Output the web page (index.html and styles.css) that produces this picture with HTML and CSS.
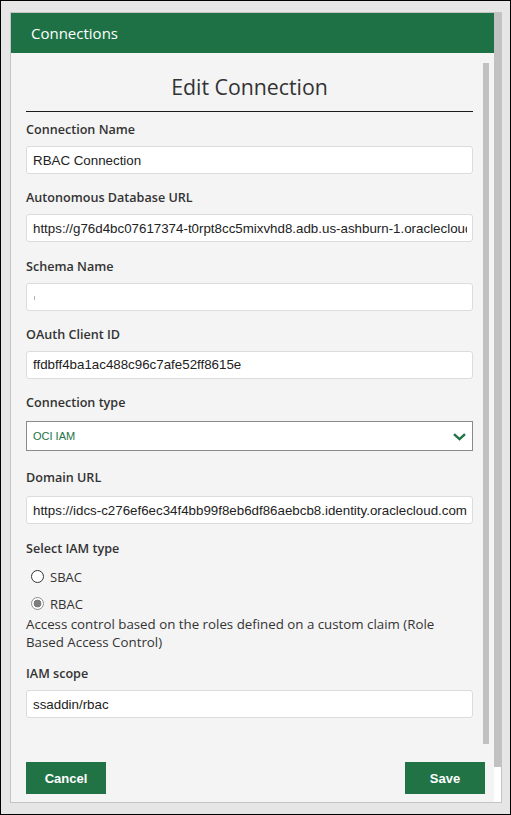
FILE: index.html
```html
<!DOCTYPE html>
<html lang="en">
<head>
<meta charset="utf-8">
<title>Connections</title>
<link rel="stylesheet" href="styles.css">
</head>
<body>
<div class="frame">
  <div class="panel">
    <div class="main">
      <div class="header">Connections</div>
      <div class="body">
        <div class="scroll">
          <div class="content">
            <h1 class="title">Edit Connection</h1>
            <div class="fields">
              <div class="field">
                <div class="label">Connection Name</div>
                <input class="input" type="text" value="RBAC Connection">
              </div>
              <div class="field">
                <div class="label">Autonomous Database URL</div>
                <input class="input" type="text" value="https://g76d4bc07617374-t0rpt8cc5mixvhd8.adb.us-ashburn-1.oraclecloud.com">
              </div>
              <div class="field">
                <div class="label">Schema Name</div>
                <div class="input input-box"><span class="mark"></span></div>
              </div>
              <div class="field">
                <div class="label">OAuth Client ID</div>
                <input class="input" type="text" value="ffdbff4ba1ac488c96c7afe52ff8615e">
              </div>
              <div class="field field-select">
                <div class="label">Connection type</div>
                <div class="select">
                  <span class="select-value">OCI IAM</span>
                  <svg class="chevron" width="13" height="8" viewBox="0 0 13 8"><path d="M1 1.2 L6.5 6.2 L12 1.2" fill="none" stroke="#217346" stroke-width="2.4"/></svg>
                </div>
              </div>
              <div class="field field-after-select">
                <div class="label">Domain URL</div>
                <input class="input" type="text" value="https://idcs-c276ef6ec34f4bb99f8eb6df86aebcb8.identity.oraclecloud.com">
              </div>
              <div class="field">
                <div class="label">Select IAM type</div>
                <div class="radios">
                  <div class="radio"><span class="radio-dot"></span><span>SBAC</span></div>
                  <div class="radio"><span class="radio-dot checked"></span><span>RBAC</span></div>
                </div>
                <p class="desc">Access control based on the roles defined on a custom claim (Role Based Access Control)</p>
              </div>
              <div class="field field-scope">
                <div class="label">IAM scope</div>
                <input class="input" type="text" value="ssaddin/rbac">
              </div>
            </div>
          </div>
          <div class="inner-bar"><div class="inner-thumb"></div></div>
        </div>
        <div class="footer">
          <button class="btn">Cancel</button>
          <button class="btn">Save</button>
        </div>
      </div>
    </div>
    <div class="outer-bar"><div class="outer-thumb"></div></div>
  </div>
</div>
</body>
</html>
```
FILE: styles.css
```css
* { box-sizing: border-box; }
html, body { margin: 0; padding: 0; }
body {
  background: #e6e6e6;
  font-family: "Open Sans", "Noto Sans", sans-serif;
  color: #333;
}
.frame {
  width: 511px;
  height: 815px;
  border: 1px solid #000;
  padding: 11px 0 0 9px;
  background: #e6e6e6;
}
.panel {
  width: 492px;
  height: 791px;
  border: 1px solid #c4c4c4;
  background: #f4f4f4;
  display: flex;
}
.main {
  width: 483px;
  display: flex;
  flex-direction: column;
}
.header {
  height: 40px;
  line-height: 40px;
  background: #1e7145;
  color: #fff;
  font-size: 15px;
  padding-left: 20px;
}
.body {
  flex: 1;
  display: flex;
  flex-direction: column;
}
.scroll {
  height: 692px;
  display: flex;
  overflow: hidden;
}
.content {
  width: 472px;
  padding: 0 10px 0 15px;
}
.inner-bar {
  width: 6px;
  padding-top: 10px;
}
.inner-thumb {
  height: 681px;
  background: #c1c1c1;
}
.title {
  margin: 19px 0 8px;
  padding-bottom: 9px;
  border-bottom: 1px solid #1a1a1a;
  font-size: 21.3px;
  line-height: 30px;
  font-weight: 400;
  text-align: center;
  color: #333;
}
.fields {
  display: flex;
  flex-direction: column;
  gap: 14.3px;
}
.label {
  font-size: 12.6px;
  line-height: 20px;
  font-weight: 600;
  color: #333;
}
.input {
  display: block;
  width: 447px;
  height: 28px;
  margin-top: 6px;
  border: 1px solid #dcdcdc;
  border-radius: 3px;
  background: #fff;
  padding: 0 5px 0 6px;
  font-family: "Liberation Sans", Arial, sans-serif;
  font-size: 13.33px;
  color: #222;
  outline: none;
}
.input-box {
  display: flex;
  align-items: center;
}
.mark {
  width: 1px;
  height: 4px;
  background: #b5b5b5;
  margin-left: 1px;
  margin-top: 2px;
}
.select {
  margin-top: 8px;
  height: 30px;
  width: 447px;
  border: 1px solid #8a8a8a;
  background: #fff;
  display: flex;
  align-items: center;
  justify-content: space-between;
  padding: 0 6px 0 6px;
}
.select-value {
  font-family: "Liberation Sans", Arial, sans-serif;
  font-size: 11px;
  color: #217346;
}
.chevron { display: block; margin-top: 1px; }
.field-after-select { margin-top: 3px; }
.field-after-select .input { margin-top: 8px; }
.radios {
  display: flex;
  flex-direction: column;
  gap: 7px;
  margin-top: 8px;
}
.radio {
  display: flex;
  align-items: center;
  height: 20px;
  font-size: 13px;
  color: #333;
  padding-left: 5px;
}
.radio-dot {
  width: 13px;
  height: 13px;
  border-radius: 50%;
  border: 1px solid #333;
  background: #fff;
  margin-right: 6px;
}
.radio-dot.checked {
  border-color: #8d8d8d;
  background: radial-gradient(circle, #7d7d7d 0 3.6px, #fff 4.2px);
}
.desc {
  margin: 1px 0 0;
  font-size: 13.3px;
  line-height: 18px;
  color: #333;
}
.field-scope { margin-top: -1px; }
.footer {
  display: flex;
  justify-content: space-between;
  padding: 17px 9px 8px 15px;
}
.btn {
  width: 80px;
  height: 32px;
  border: none;
  background: #217346;
  color: #fff;
  font-family: "Liberation Sans", Arial, sans-serif;
  font-size: 13px;
  font-weight: 700;
  padding: 0;
}
.outer-bar {
  width: 7px;
  background: #fff;
}
.outer-thumb {
  height: 754px;
  background: #c1c1c1;
}
```
